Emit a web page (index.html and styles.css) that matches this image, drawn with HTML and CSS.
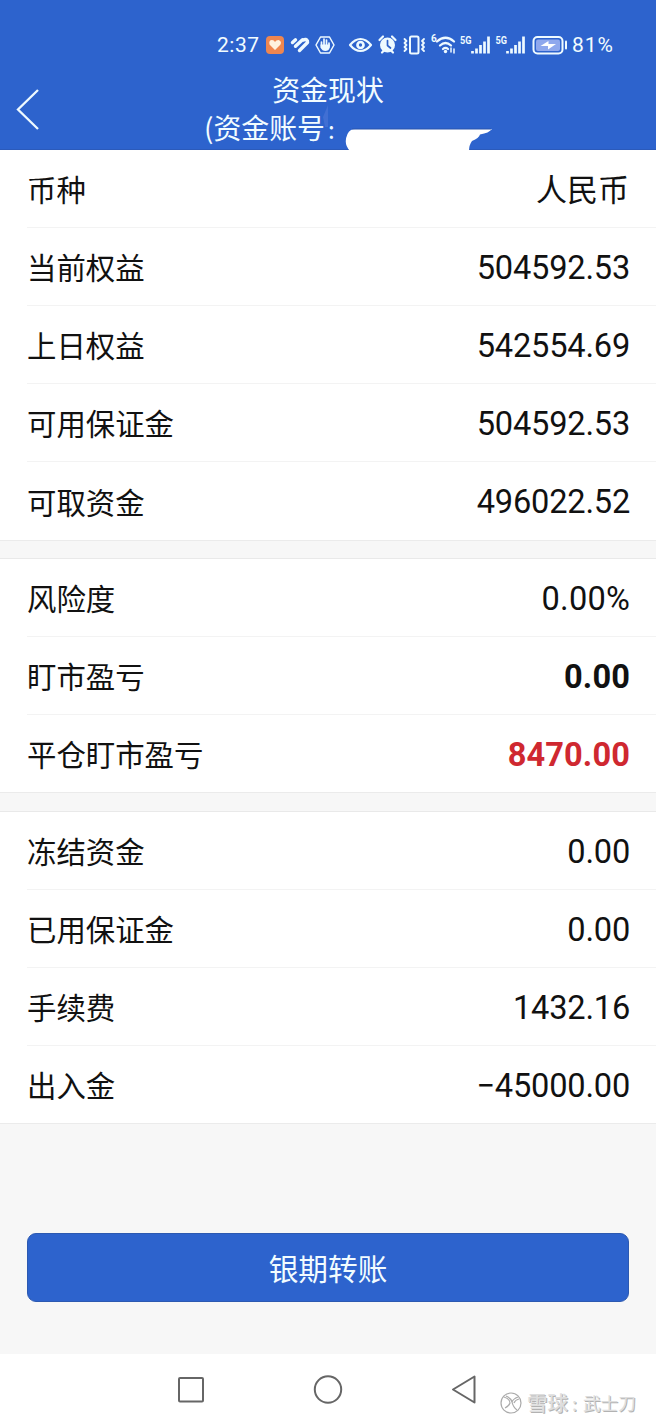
FILE: index.html
```html
<!DOCTYPE html>
<html lang="zh-CN">
<head>
<meta charset="utf-8">
<title>资金现状</title>
<link rel="stylesheet" href="styles.css">
</head>
<body>
<div class="screen">
  <header class="header">
    <div class="status">
      <span class="clock">2:37</span>
      <svg class="status-icons" width="310" height="34" viewBox="260 28 310 34" fill="none" stroke="#eefaff" stroke-width="2" stroke-linecap="round" stroke-linejoin="round">
        <rect x="266" y="36" width="18" height="18" rx="4" fill="#ef8650" stroke="none"/>
        <path d="M275 50 L269.5 44.5 Q268.5 40 272 40 Q274 40 275 42 Q276 40 278.5 40 Q282 41 280.5 44.5Z" fill="#fff2df" stroke="none"/>
        <path d="M292.500 42.500 L295.500 39.800 M295.500 46.300 L302.500 39.800 M299.500 50.500 L307.500 42.500 M303.500 40 Q306 38.500 307.500 41" stroke-width="3.400"/>
        <path d="M320.500 37 h9 l4.500 8 l-4.500 8 h-9 l-4.500 -8z" stroke-width="1.500"/>
        <path d="M321.500 46 v-4 M324 45 v-6 M326.500 45 v-5 M329 46 v-3" stroke-width="1.700"/>
        <path d="M320.500 44.500 h9.300 v3 q-1 3.500 -4.500 3.500 q-3 0 -4.800 -3.500z" fill="#eefaff" stroke="none"/>
        <path d="M350 45 Q355 39 360.500 39 Q366 39 371 45 Q366 51 360.500 51 Q355 51 350 45Z" stroke-width="2.200"/>
        <circle cx="360.500" cy="45" r="3" stroke-width="2.700"/>
        <circle cx="387.500" cy="45" r="7.500" fill="#eefaff" stroke="none"/>
        <path d="M379.500 40 l3.500 -3.500 M395.500 40 l-3.500 -3.500 M382 52.500 l2 -2 M393 52.500 l-2 -2" stroke-width="2.200"/>
        <path d="M387.500 40.500 v5 l3 2.500" stroke="#2b60c9" stroke-width="1.700"/>
        <rect x="410" y="36.500" width="8.500" height="17" rx="1.500"/>
        <path d="M404.500 39 l2 2 l-2 2 l2 2 l-2 2 l2 2 l-2 2 M424 39 l-2 2 l2 2 l-2 2 l2 2 l-2 2 l2 2" stroke-width="1.800"/>
        <path d="M437 41.500 Q445.500 34 454 41.500 M440 45.500 Q445.500 40.500 451 45.500 M443 49 Q445.500 46.800 448 49" stroke-width="2.300"/>
        <circle cx="445.500" cy="51.500" r="1.700" fill="#eefaff" stroke="none"/>
        <path d="M451 48 v4 M454 53 v-4" stroke-width="1.500"/>
        <path d="M472.500 53.500 v-2.500 M476.500 53.500 v-5 M480.500 53.500 v-8.500 M484.500 53.500 v-12 M488.500 53.500 v-17 M507.500 53.500 v-2.500 M511.500 53.500 v-5 M515.500 53.500 v-8.500 M519.500 53.500 v-12 M523.500 53.500 v-17" stroke-width="2.700" stroke-linecap="butt"/>
        <rect x="533.500" y="37" width="29" height="16.500" rx="4"/>
        <rect x="536" y="39.500" width="24" height="11.500" rx="2" fill="#8fa8ed" stroke="none"/>
        <path d="M540.500 46 l8 -5 v3 h7.500 l-8 5.500 v-3.500z" fill="#fff" stroke="none"/>
        <path d="M566 41.500 v7"/>
        <text class="net" x="431" y="42" font-size="10">6</text>
        <text class="net" x="460" y="44" font-size="11" textLength="11.500" lengthAdjust="spacingAndGlyphs">5G</text>
        <text class="net" x="495.500" y="44" font-size="11" textLength="11.500" lengthAdjust="spacingAndGlyphs">5G</text>
      </svg>
      <span class="charge">81%</span>
    </div>
    <div class="titlebar">
      <svg class="back" width="26" height="44" viewBox="0 0 26 44"><path d="M23 2 L3 21.500 L23 41" fill="none" stroke="#eefaff" stroke-width="2.300"/></svg>
      <h1 class="title">资金现状<br><span class="account">(资金账号<span class="colon">:</span></span></h1>
    </div>
    <svg class="smudge" width="10" height="22" viewBox="0 0 10 22"><path d="M1 12 L6 0 V22 H3Z" fill="#416fd3"/></svg>
    <svg class="mask" width="150" height="24" viewBox="345 127 150 24"><path d="M350 151 Q343 144 347.500 134 Q350 129 355 129 H492 Q489 133 480 134.500 Q479 138 472 141 Q469 145 469 151Z" fill="#fff"/><path d="M352 129 H491" stroke="#2854ad" stroke-width="1"/></svg>
  </header>
  <main>
    <section class="group first">
      <div class="row"><span>币种</span><span class="value cn">人民币</span></div>
      <div class="row"><span>当前权益</span><span class="value">504592.53</span></div>
      <div class="row"><span>上日权益</span><span class="value">542554.69</span></div>
      <div class="row"><span>可用保证金</span><span class="value">504592.53</span></div>
      <div class="row"><span>可取资金</span><span class="value">496022.52</span></div>
    </section>
    <section class="group second">
      <div class="row"><span>风险度</span><span class="value percent">0.00%</span></div>
      <div class="row"><span>盯市盈亏</span><span class="value strong">0.00</span></div>
      <div class="row"><span>平仓盯市盈亏</span><span class="value strong gain">8470.00</span></div>
    </section>
    <section class="group">
      <div class="row"><span>冻结资金</span><span class="value">0.00</span></div>
      <div class="row"><span>已用保证金</span><span class="value">0.00</span></div>
      <div class="row"><span>手续费</span><span class="value">1432.16</span></div>
      <div class="row"><span>出入金</span><span class="value">−45000.00</span></div>
    </section>
    <button class="transfer">银期转账</button>
  </main>
  <footer class="nav">
    <svg width="656" height="70" viewBox="0 1354 656 70" fill="none" stroke="#666" stroke-width="2" stroke-linejoin="round">
      <rect x="179" y="1378" width="24" height="23.500" rx="1"/>
      <circle cx="328" cy="1389.500" r="13.200"/>
      <path d="M453 1389.500 L474.500 1376.500 V1402.500Z"/>
    </svg>
    <div class="watermark">
      <svg width="24" height="24" viewBox="0 0 24 24" fill="none" stroke="#aaa" stroke-width="1.200"><circle cx="12" cy="12" r="10"/><path d="M5 6 Q11 8 11 12 Q10 15 6 17 M7 5 Q12 7 13 11 M19 6 Q14 8 13 11 Q14 16 18 19 M20 8 Q16 9 15 12"/></svg>
      <span class="brand">雪球</span><span class="sep">:</span><span class="user">武士刀</span>
    </div>
  </footer>
</div>
</body>
</html>
```
FILE: styles.css
```css
* { box-sizing: border-box; }
body {
  margin: 0;
  background: #f7f7f7;
  color: #111;
  font-family: "Noto Sans CJK SC", sans-serif;
}
.screen { width: 656px; height: 1424px; display: flex; flex-direction: column; overflow: hidden; }
.header { position: relative; height: 150px; flex: none; background: #2d63cd; color: #f2fcff; border-bottom: 1px solid #2b5aba; }
.status { height: 62px; padding: 28px 0 0 217px; display: flex; }
.clock, .charge { font: 21px/35px Roboto, sans-serif; white-space: nowrap; }
.clock { width: 43px; letter-spacing: .5px; }
.status-icons { flex: none; }
.charge { padding-left: 2px; letter-spacing: .9px; }
.net { font-family: Roboto, sans-serif; font-weight: 700; fill: #eefaff; stroke: none; }
.titlebar { display: flex; padding-left: 15px; }
.back { margin-top: 26px; flex: none; }
.title { margin: 8px 0 0 163px; font-size: 27.9px; font-weight: 400; line-height: 38px; width: 248px; text-align: center; }
.account { display: block; text-align: left; }
.colon { margin-left: 3px; font-size: 24px; }
.smudge { position: absolute; left: 322px; top: 105px; }
.mask { position: absolute; left: 345px; top: 127px; }
main { height: 1204px; flex: none; }
.group { background: #fff; border-top: 1px solid #e9e9e9; border-bottom: 1px solid #ebebeb; margin-bottom: 17px; padding-left: 27px; }
.group.first { border-top: 0; }
.group.second { margin-bottom: 18px; }
.row { height: 78px; padding: 0 26px 1px 0; display: flex; align-items: center; justify-content: space-between; border-bottom: 1px solid #f3f3f3; font-size: 29.4px; line-height: 40px; }
.row:last-child { border-bottom: 0; }
.group:not(.first) .row:last-child { height: 77px; }
.value { padding-top: 3px; font: 32.6px/40px Roboto, sans-serif; letter-spacing: -.2px; }
.value.cn { padding: 0 1px 0 0; font: 31px/40px "Noto Sans CJK SC", sans-serif; letter-spacing: 0; }
.value.percent { letter-spacing: .2px; }
.value.strong { font-weight: 700; letter-spacing: .1px; }
.value.gain { color: #cf2830; }
.transfer { display: block; margin: 109px 27px 0; width: 602px; height: 69px; padding: 0; border: 1px solid #2c59b1; border-radius: 9px; background: #2d63cd; color: #f2fcff; font: 29.7px/38px "Noto Sans CJK SC", sans-serif; }
.nav { position: relative; height: 70px; flex: none; background: #fff; }
.watermark { position: absolute; left: 499px; top: 37px; display: flex; align-items: center; height: 24px; color: #dedede; text-shadow: 1px 1px 0 #b2b2b2; font-size: 18px; line-height: 24px; }
.brand { font-size: 20.5px; font-weight: 500; margin: -2px 0 0 4px; }
.sep { width: 15px; padding-left: 4px; }
.user { font-size: 17.6px; }
```
